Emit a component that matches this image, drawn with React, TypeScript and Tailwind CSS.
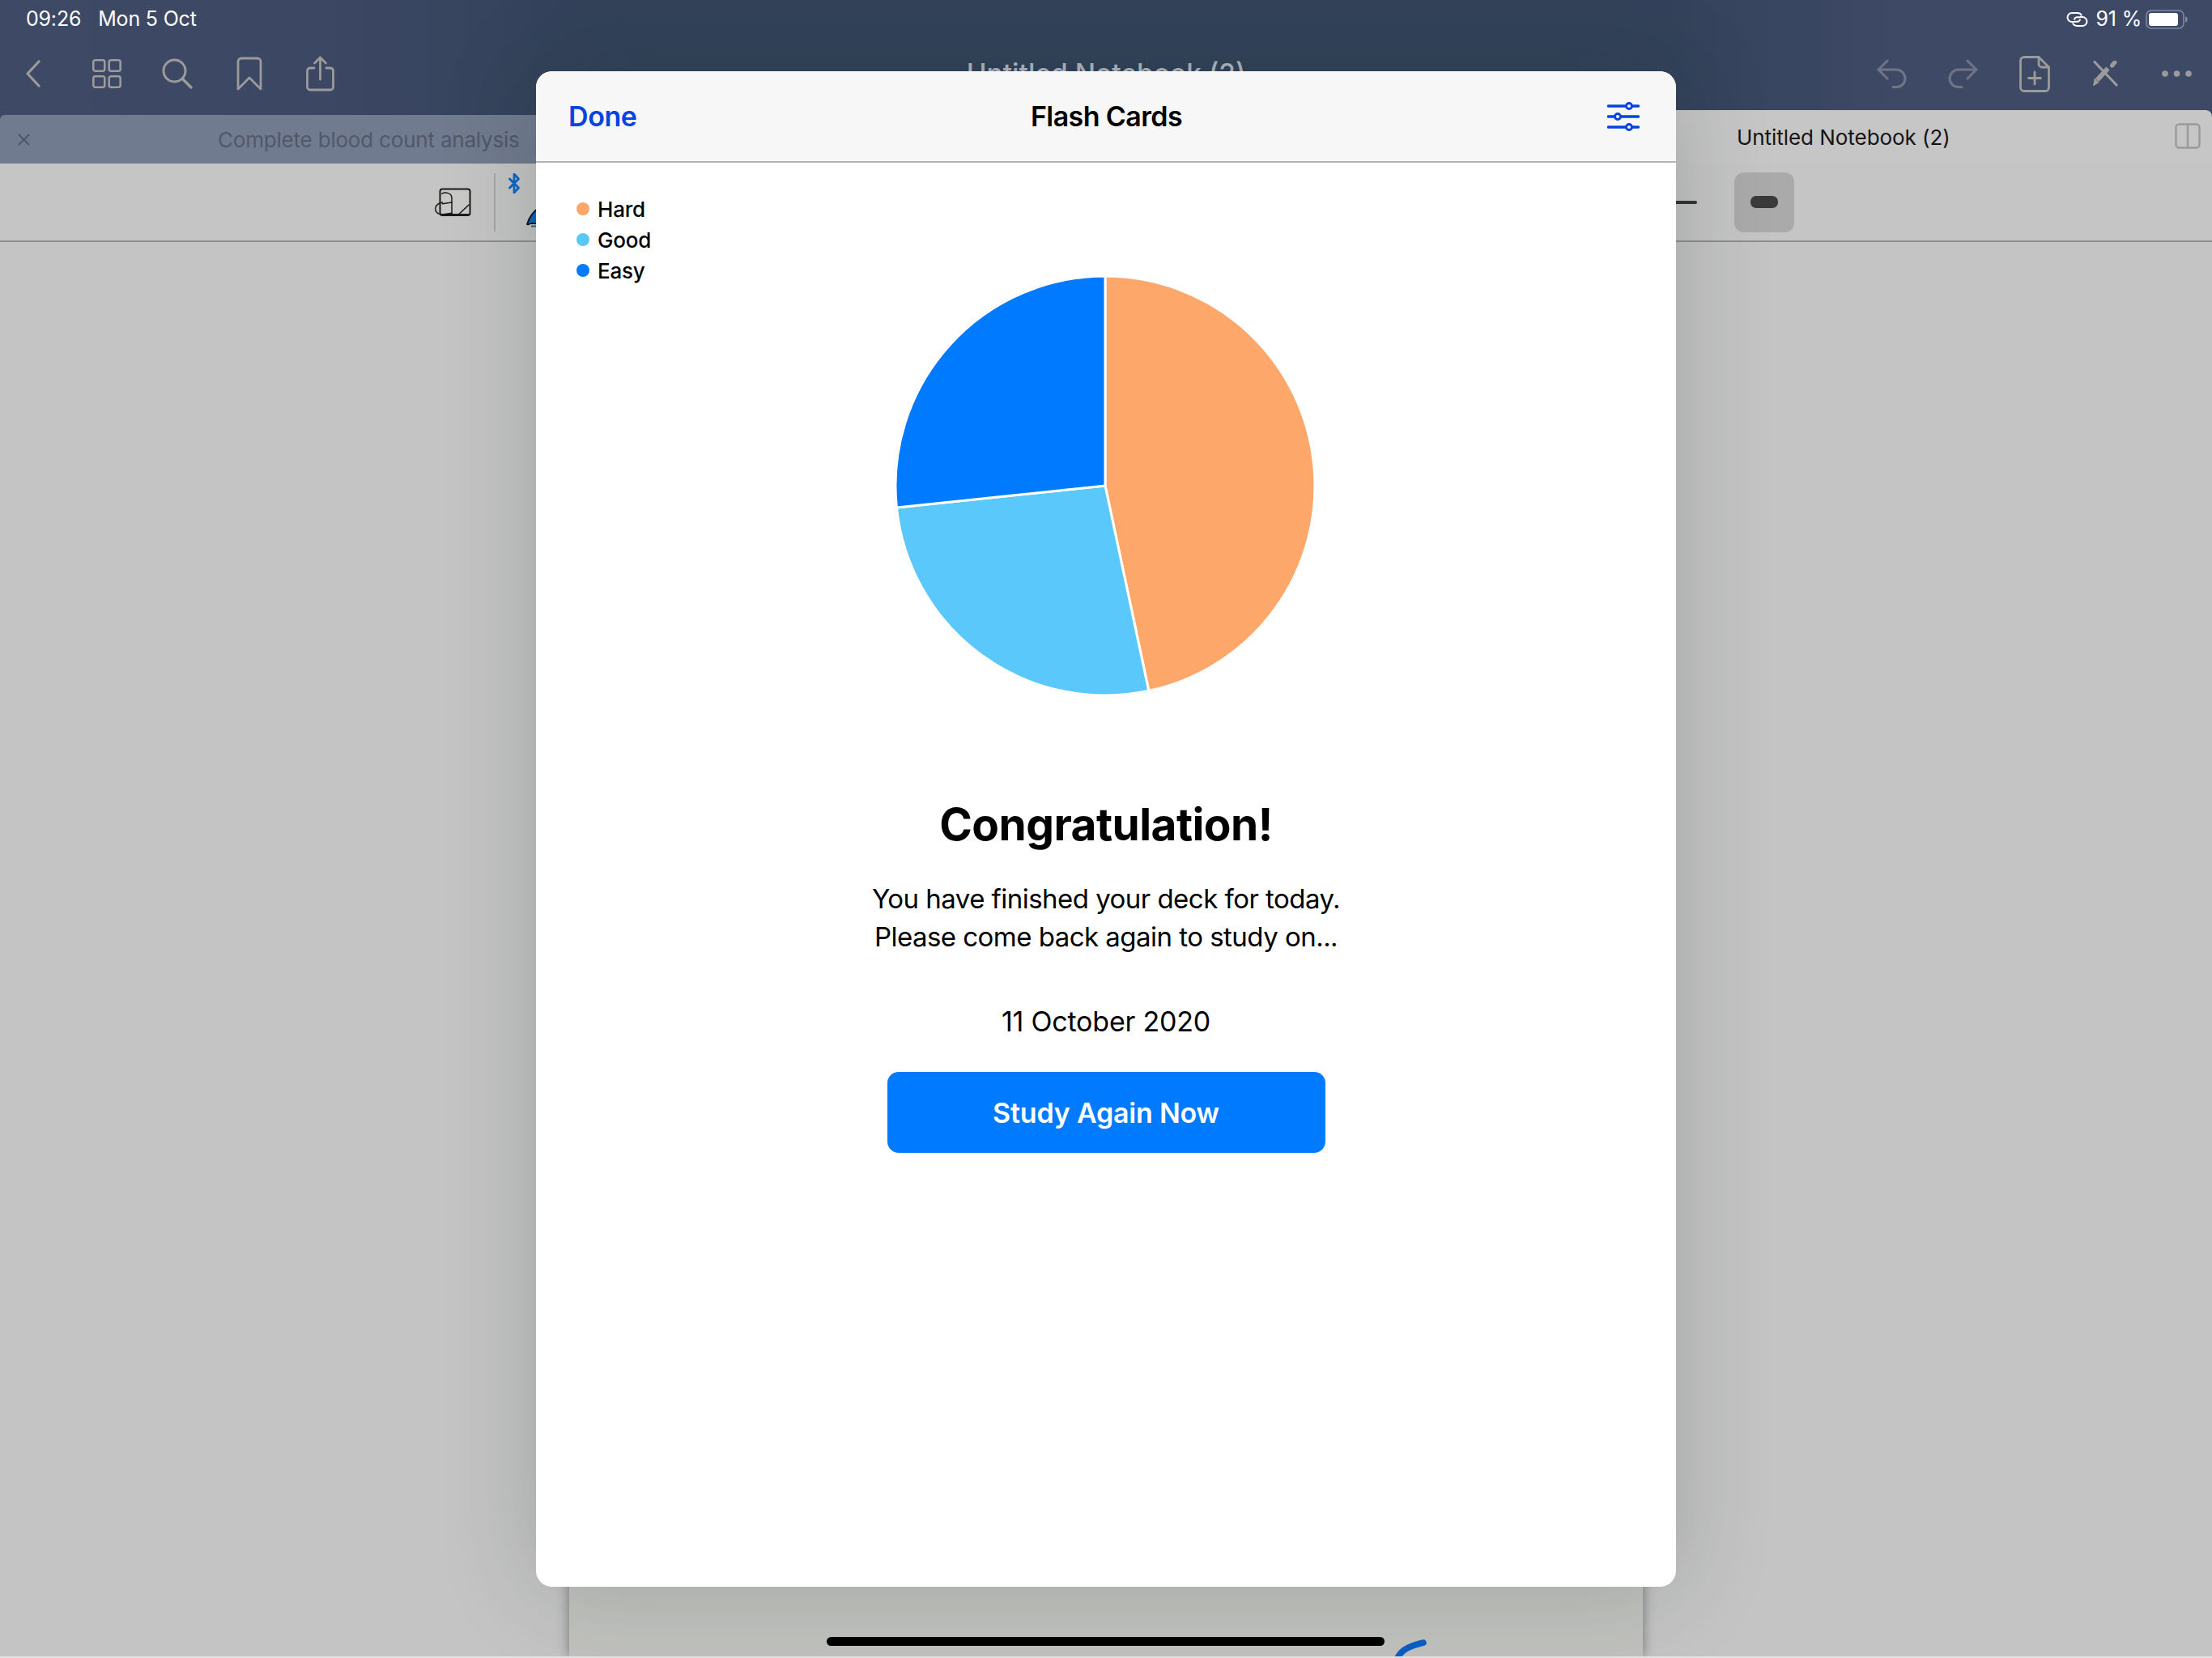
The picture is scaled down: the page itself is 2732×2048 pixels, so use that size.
import React from "react";

const F = '"Inter","Liberation Sans",sans-serif';

function polar(a: number, r: number, cx = 260, cy = 260) {
  const t = ((a - 90) * Math.PI) / 180;
  return [cx + r * Math.cos(t), cy + r * Math.sin(t)];
}
function slice(a0: number, a1: number, r = 259) {
  const [x0, y0] = polar(a0, r);
  const [x1, y1] = polar(a1, r);
  const large = a1 - a0 > 180 ? 1 : 0;
  return `M260 260 L${x0} ${y0} A${r} ${r} 0 ${large} 1 ${x1} ${y1} Z`;
}

function Pie() {
  return (
    <svg width="520" height="520" viewBox="0 0 520 520" className="block">
      <path d={slice(0, 168)} fill="#FDA86A" stroke="#fff" strokeWidth="3" strokeLinejoin="round" />
      <path d={slice(168, 264)} fill="#5AC8FA" stroke="#fff" strokeWidth="3" strokeLinejoin="round" />
      <path d={slice(264, 360)} fill="#007AFF" stroke="#fff" strokeWidth="3" strokeLinejoin="round" />
    </svg>
  );
}

const G = "#9b9b9b";

function Chevron() {
  return (
    <svg width="18" height="34" viewBox="0 0 18 34" fill="none" stroke={G} strokeWidth="3.2" strokeLinecap="round" strokeLinejoin="round">
      <path d="M16 2 2 17l14 15" />
    </svg>
  );
}
function GridIcon() {
  return (
    <svg width="36" height="36" viewBox="0 0 36 36" fill="none" stroke={G} strokeWidth="2.6">
      <rect x="1.3" y="1.3" width="14" height="13.5" rx="2.5" />
      <rect x="20.7" y="1.3" width="14" height="13.5" rx="2.5" />
      <rect x="1.3" y="21.2" width="14" height="13.5" rx="2.5" />
      <rect x="20.7" y="21.2" width="14" height="13.5" rx="2.5" />
    </svg>
  );
}
function SearchIcon() {
  return (
    <svg width="38" height="38" viewBox="0 0 38 38" fill="none" stroke={G} strokeWidth="3" strokeLinecap="round">
      <circle cx="15.5" cy="15.5" r="13.5" />
      <path d="M25.5 25.5 36 36" strokeWidth="3.4" />
    </svg>
  );
}
function BookmarkIcon() {
  return (
    <svg width="32" height="42" viewBox="0 0 32 42" fill="none" stroke={G} strokeWidth="2.8" strokeLinejoin="round">
      <path d="M2 6a4 4 0 0 1 4-4h20a4 4 0 0 1 4 4v34L16 26 2 40Z" />
    </svg>
  );
}
function ShareIcon() {
  return (
    <svg width="35" height="44" viewBox="0 0 35 44" fill="none" stroke={G} strokeWidth="2.8" strokeLinecap="round" strokeLinejoin="round">
      <path d="M10 15H5a3.5 3.5 0 0 0-3.5 3.5v20A3.5 3.5 0 0 0 5 42h25a3.5 3.5 0 0 0 3.5-3.5v-20A3.5 3.5 0 0 0 30 15h-5" />
      <path d="M17.500 29V2M10.500 9l7-7 7 7" />
    </svg>
  );
}
function UndoIcon({ flip = false }: { flip?: boolean }) {
  return (
    <svg width="37" height="36" viewBox="0 0 37 36" fill="none" stroke="#6f7585" strokeWidth="3" strokeLinecap="round" strokeLinejoin="round" className={flip ? "-scale-x-100" : ""}>
      <path d="M13 2 2 13l11 11" />
      <path d="M2 13h22a11 11 0 0 1 11 11v0a10.500 10.500 0 0 1-10.500 10.500H20" />
    </svg>
  );
}
function DocPlus() {
  return (
    <svg width="38" height="45" viewBox="0 0 38 45" fill="none" stroke={G} strokeWidth="2.8" strokeLinecap="round" strokeLinejoin="round">
      <path d="M24 1.500H6A4.500 4.500 0 0 0 1.500 6v33A4.500 4.500 0 0 0 6 43.500h26a4.500 4.500 0 0 0 4.500-4.500V14Z" />
      <path d="M24 1.500V10a4 4 0 0 0 4 4h8.500M19 20v15M11.500 27.500h15" />
    </svg>
  );
}
function PenCross() {
  return (
    <svg width="32" height="32" viewBox="0 0 32 32" fill="none" stroke={G}>
      <path d="M3 1.500 30 30" strokeWidth="3.200" strokeLinecap="round" />
      <path d="M6 24 19.500 9.500" strokeWidth="6" />
      <path d="M2.800 21.500 8.500 27 1 31.500Z" fill={G} stroke="none" />
      <path d="M24.500 6 28 2" strokeWidth="5" strokeLinecap="round" />
    </svg>
  );
}
function Dots() {
  return (
    <svg width="37" height="10" viewBox="0 0 37 10" fill={G}>
      <circle cx="4" cy="5" r="3.800" />
      <circle cx="18.500" cy="5" r="3.800" />
      <circle cx="33" cy="5" r="3.800" />
    </svg>
  );
}
function LinkIcon() {
  return (
    <svg width="27" height="18" viewBox="0 0 27 18" fill="none" stroke="#fff" strokeWidth="2">
      <path d="M10 12H7a5.500 5.500 0 0 1 0-11h7a5.500 5.500 0 0 1 5 3.500" />
      <path d="M17 6h3a5.500 5.500 0 0 1 0 11h-7a5.500 5.500 0 0 1-5-3.500" />
      <path d="M10 9.500a3.300 3.300 0 0 1 3.300-3.300H17M17 8.500a3.300 3.300 0 0 1-3.300 3.300H10" />
    </svg>
  );
}
function Battery() {
  return (
    <svg width="52" height="24" viewBox="0 0 52 24">
      <rect x="1" y="1" width="46" height="22" rx="6" fill="none" stroke="#8089a0" strokeWidth="1.600" />
      <rect x="4" y="4" width="36" height="16" rx="3" fill="#fff" />
      <path d="M49 8.500c2 .6 2.800 1.800 2.800 3.500s-.8 2.900-2.800 3.500Z" fill="#8089a0" />
    </svg>
  );
}
function SplitIcon() {
  return (
    <svg width="32" height="32" viewBox="0 0 32 32" fill="none" stroke="#9a9a9a" strokeWidth="2.400">
      <rect x="1.500" y="1.500" width="29" height="29" rx="4" />
      <path d="M16 1.500v29" />
    </svg>
  );
}
function Scribble() {
  return (
    <svg width="45" height="36" viewBox="0 0 45 36" fill="none" stroke="#1a1a1a" strokeWidth="1.500" strokeLinecap="round">
      <rect x="6.500" y="1.500" width="37" height="32.500" rx="3" fill="#c9c9c7" strokeWidth="2" />
      <path d="M7 33h36" strokeWidth="1.800" />
      <path d="M8.700 7.300C13 5 21 6 21 13v20" />
      <path d="M9.300 19.700 21 18" />
      <path d="M9.300 18C4 19 .8 22 .8 26.300c0 5 5 7 10 6.500l10.200-1.500" />
      <path d="M29.300 33 42 21" />
    </svg>
  );
}
function BluetoothIcon() {
  return (
    <svg width="14" height="25" viewBox="0 0 14 25" fill="none" stroke="#0b66c8" strokeWidth="2.800" strokeLinecap="round" strokeLinejoin="round">
      <path d="M1.500 7 12.500 18 7 24V1l5.500 6L1.500 18" />
    </svg>
  );
}
function PenTip() {
  return (
    <svg width="14" height="30" viewBox="0 0 14 30" className="overflow-visible">
      <path d="M1 21C3 14 8 6 16 0l2 20H6Q1 22 1 21Z" fill="#0b66c8" stroke="#111" strokeWidth="1.800" strokeLinejoin="round" />
      <rect x="6" y="22.500" width="12" height="2" fill="#0b66c8" />
    </svg>
  );
}
function Sliders() {
  return (
    <svg width="40" height="36" viewBox="0 0 40 36" fill="none" stroke="#0743e0" strokeLinecap="round">
      <path d="M1.500 5h37M1.500 18h37M1.500 31h37" strokeWidth="3.400" />
      <circle cx="27" cy="5" r="3.500" fill="#f7f7f7" strokeWidth="2.800" />
      <circle cx="13" cy="18" r="3.500" fill="#f7f7f7" strokeWidth="2.800" />
      <circle cx="27" cy="31" r="3.500" fill="#f7f7f7" strokeWidth="2.800" />
    </svg>
  );
}
function Close() {
  return (
    <svg width="15" height="15" viewBox="0 0 15 15" fill="none" stroke="#4d5566" strokeWidth="1.800">
      <path d="M1 1l13 13M14 1 1 14" />
    </svg>
  );
}

function LegendRow({ color, label }: { color: string; label: string }) {
  return (
    <div className="flex h-[38px] items-center gap-[10px]">
      <span className="h-[16px] w-[16px] rounded-full" style={{ backgroundColor: color }} />
      <span className="text-[26px] font-medium tracking-[-0.2px] text-black">{label}</span>
    </div>
  );
}

export default function App() {
  return (
    <div className="relative flex h-[2048px] w-[2732px] flex-col overflow-hidden bg-[#c4c4c4]" style={{ fontFamily: F }}>
      <header className="flex h-[298px] shrink-0 flex-col bg-[linear-gradient(90deg,#3e4966_0%,#3c4763_15%,#33425a_26%,#33425a_75%,#3e4966_86%,#3e4966_100%)]">
        <div className="flex h-[46px] items-center justify-between pl-[32px] pr-[30px] pt-[2px] text-[25px] tracking-[-0.2px] text-white">
          <div className="flex gap-[21px]">
            <span>09:26</span>
            <span>Mon 5 Oct</span>
          </div>
          <div className="flex items-center">
            <LinkIcon />
            <span className="ml-[10px] mr-[5px]">91 %</span>
            <Battery />
          </div>
        </div>
        <div className="relative flex h-[90px] items-center justify-between pl-[32px] pr-[25px]">
          <div className="flex items-center">
            <Chevron />
            <div className="ml-[64px]"><GridIcon /></div>
            <div className="ml-[50px]"><SearchIcon /></div>
            <div className="ml-[54px]"><BookmarkIcon /></div>
            <div className="ml-[54px]"><ShareIcon /></div>
          </div>
          <div className="absolute left-0 right-0 top-[20px] text-center text-[33.500px] font-medium text-[#b4b8c2]">Untitled Notebook (2)</div>
          <div className="flex items-center">
            <UndoIcon />
            <div className="ml-[51px]"><UndoIcon flip /></div>
            <div className="ml-[51px]"><DocPlus /></div>
            <div className="ml-[52px]"><PenCross /></div>
            <div className="ml-[54px]"><Dots /></div>
          </div>
        </div>
        <div className="flex h-[66px]">
          <div className="mt-[6px] flex w-[910px] items-center rounded-tl-[6px] bg-[#717b8f] pl-[22px]">
            <Close />
            <span className="ml-[232px] text-[26px] tracking-[-0.2px] text-[#50586a]">Complete blood count analysis</span>
          </div>
          <div className="flex flex-1 items-center rounded-tr-[8px] bg-[#c6c6c6] pl-[1235px] pr-[14px]">
            <span className="text-[26px] tracking-[-0.05px] text-[#141414]">Untitled Notebook (2)</span>
            <div className="ml-auto -mt-[2px]"><SplitIcon /></div>
          </div>
        </div>
      </header>
      <div className="absolute left-0 right-0 top-[202px] flex h-[97px] items-center border-b-2 border-[#8f8f8d] bg-[#c5c5c5] pl-[537px] pr-[516px]">
        <Scribble />
        <div className="ml-[28px] h-[72px] w-[2px] bg-[#a6a6a6]" />
        <div className="ml-[16px] flex h-[72px] flex-col justify-between">
          <BluetoothIcon />
          <div className="ml-[22px]"><PenTip /></div>
        </div>
        <div className="ml-auto h-[4px] w-[28px] rounded-full bg-[#333]" />
        <div className="ml-[46px] flex h-[74px] w-[74px] items-center justify-center rounded-[12px] bg-[#a9aaa9]">
          <div className="h-[15px] w-[34px] rounded-[7px] bg-[#3a3a3a]" />
        </div>
      </div>
      <main className="flex flex-1 justify-center bg-[#c4c4c4]">
        <div className="relative h-full w-[1326px] bg-[#c1c2bf] shadow-[0_0_14px_rgba(0,0,0,0.4)]">
          <svg width="40" height="22" viewBox="0 0 40 22" className="absolute bottom-0 right-[267px]" fill="none">
            <path d="M36 5C20 9 9 13 4 24" stroke="#0b5fc4" strokeWidth="7.500" strokeLinecap="round" />
          </svg>
        </div>
      </main>
      <div className="relative h-[2px] shrink-0 bg-[#e6e6e6]" />
      <div className="absolute left-[1021px] top-[2022px] h-[11px] w-[689px] rounded-full bg-black" />

      <section className="absolute left-[662px] top-[88px] flex h-[1872px] w-[1408px] flex-col overflow-hidden rounded-[20px] bg-white shadow-[0_0_120px_rgba(20,40,30,0.2)]">
        <div className="flex h-[113px] shrink-0 items-center justify-between border-b-2 border-[#b4b4b4] bg-[#f7f7f7] pl-[40px] pr-[45px]">
          <span className="w-[206px] text-[34px] font-semibold tracking-[-0.4px] text-[#0743e0]">Done</span>
          <span className="text-[34px] font-semibold tracking-[-0.6px] text-black">Flash Cards</span>
          <div className="flex w-[200px] justify-end"><Sliders /></div>
        </div>
        <div className="flex flex-1 flex-col items-center">
          <div className="grid w-full grid-cols-[1fr_auto_1fr]">
            <div className="pl-[50px] pt-[38px]">
              <LegendRow color="#FDA86A" label="Hard" />
              <LegendRow color="#5AC8FA" label="Good" />
              <LegendRow color="#007AFF" label="Easy" />
            </div>
            <div className="-ml-[2px] pt-[139px]"><Pie /></div>
            <div />
          </div>
          <h1 className="mt-[125px] text-[55px] font-bold leading-[66px] tracking-[-0.55px] text-black">Congratulation!</h1>
          <p className="mt-[36px] text-center text-[33px] leading-[46.500px] tracking-[-0.53px] text-black">
            You have finished your deck for today.
            <br />
            Please come back again to study on...
          </p>
          <p className="mt-[59px] text-[34px] leading-[46px] tracking-[-0.2px] text-black">11 October 2020</p>
          <button className="mt-[39px] flex h-[100px] w-[541px] items-center justify-center rounded-[14px] bg-[#007aff] text-[34px] font-semibold tracking-[-0.2px] text-white">
            Study Again Now
          </button>
        </div>
      </section>
    </div>
  );
}
